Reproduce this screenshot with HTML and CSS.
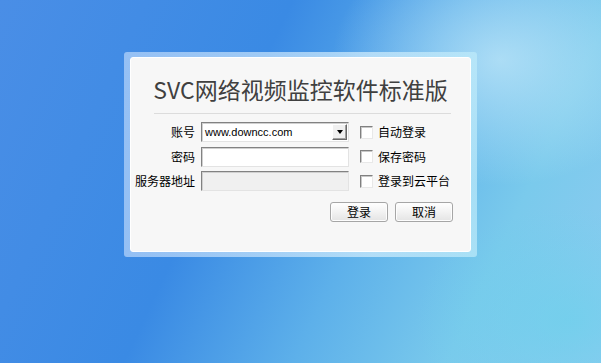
FILE: index.html
```html
<!DOCTYPE html>
<html lang="zh">
<head>
<meta charset="utf-8">
<link rel="stylesheet" href="styles.css">
</head>
<body>
<div class="desktop">
  <div class="frame">
    <div class="panel">
      <h1 class="title">SVC网络视频监控软件标准版</h1>
      <div class="rule"></div>
      <div class="form">
        <label class="lbl">账号</label>
        <div class="field combo"><span class="val">www.downcc.com</span><span class="drop"><span class="arrow"></span></span></div>
        <div class="chk"><span class="box"></span><span>自动登录</span></div>

        <label class="lbl">密码</label>
        <div class="field"></div>
        <div class="chk"><span class="box"></span><span>保存密码</span></div>

        <label class="lbl">服务器地址</label>
        <div class="field disabled"></div>
        <div class="chk"><span class="box"></span><span>登录到云平台</span></div>
      </div>
      <div class="actions">
        <button class="btn">登录</button>
        <button class="btn">取消</button>
      </div>
    </div>
  </div>
</div>
</body>
</html>
```

FILE: styles.css
```css
html, body {
  margin: 0;
  padding: 0;
  width: 601px;
  height: 363px;
  overflow: hidden;
}
.desktop {
  width: 601px;
  height: 363px;
  padding-top: 52px;
  box-sizing: border-box;
  background:
    radial-gradient(ellipse 240px 180px at 500px 60px, rgba(200,235,250,0.7), rgba(200,235,250,0) 70%),
    radial-gradient(ellipse 220px 160px at 570px 320px, rgba(105,210,235,0.6), rgba(105,210,235,0) 70%),
    linear-gradient(115deg, #4a8ee6 0%, #3a8ae4 38%, #5db0ea 60%, #7acaec 80%, #8ccbf0 100%);
  font-family: "Noto Sans CJK SC", "Liberation Sans", sans-serif;
}
.frame {
  width: 353px;
  height: 205px;
  margin: 0 auto;
  box-sizing: border-box;
  padding: 5px 6px;
  border-radius: 3px;
  background: linear-gradient(90deg, rgba(170,205,248,0.8), rgba(205,235,252,0.75) 70%, rgba(190,235,250,0.7));
}
.panel {
  height: 100%;
  box-sizing: border-box;
  background: #f7f7f7;
  border: 1px solid #ffffff;
  border-radius: 3px;
  padding-top: 15px;
}
.title {
  margin: 0;
  font-weight: normal;
  font-size: 23px;
  line-height: 32px;
  color: #404040;
  text-align: center;
}
.rule {
  height: 1px;
  background: #dcdcdc;
  margin: 8px 19px 0 23px;
}
.form {
  display: grid;
  grid-template-columns: 70px 148px 1fr;
  grid-auto-rows: 20px;
  row-gap: 4.5px;
  margin-top: 8px;
  font-size: 12px;
  color: #000;
}
.lbl {
  text-align: right;
  padding-right: 6px;
  line-height: 20px;
  white-space: nowrap;
}
.field {
  box-sizing: border-box;
  height: 20px;
  background: #fff;
  border-top: 1px solid #828282;
  border-left: 1px solid #828282;
  border-right: 1px solid #e3e3e3;
  border-bottom: 1px solid #e3e3e3;
  box-shadow: inset 1px 1px 0 #d0d0d0;
  display: flex;
  align-items: center;
}
.field.disabled {
  background: #f0f0f0;
}
.combo .val {
  flex: 1;
  font-family: "Liberation Sans", sans-serif;
  font-size: 11px;
  padding-left: 3px;
  color: #000;
}
.drop {
  width: 15px;
  height: 16px;
  margin-right: 1px;
  box-sizing: border-box;
  background: #f0f0f0;
  border-top: 1px solid #fff;
  border-left: 1px solid #fff;
  border-right: 1px solid #696969;
  border-bottom: 1px solid #696969;
  box-shadow: inset -1px -1px 0 #a0a0a0;
  display: flex;
  align-items: center;
  justify-content: center;
}
.arrow {
  width: 0;
  height: 0;
  border-left: 3.5px solid transparent;
  border-right: 3.5px solid transparent;
  border-top: 4px solid #000;
}
.chk {
  display: flex;
  align-items: center;
  padding-left: 11px;
  line-height: 20px;
  white-space: nowrap;
}
.box {
  width: 13px;
  height: 13px;
  box-sizing: border-box;
  background: #fff;
  border-top: 1px solid #808080;
  border-left: 1px solid #808080;
  border-right: 1px solid #e8e8e8;
  border-bottom: 1px solid #e8e8e8;
  box-shadow: inset 1px 1px 0 #c8c8c8;
  margin-right: 5px;
}
.actions {
  display: flex;
  justify-content: flex-end;
  gap: 7px;
  padding-right: 17px;
  margin-top: 11px;
}
.btn {
  width: 58px;
  height: 20px;
  padding: 0;
  border: 1px solid #a6a6a6;
  border-radius: 3px;
  background: linear-gradient(#ffffff, #f2f2f2 50%, #e4e4e4);
  box-shadow: inset 0 0 0 1px #fdfdfd;
  font-family: "Noto Sans CJK SC", sans-serif;
  font-size: 12px;
  line-height: 18px;
  color: #000;
}
```
